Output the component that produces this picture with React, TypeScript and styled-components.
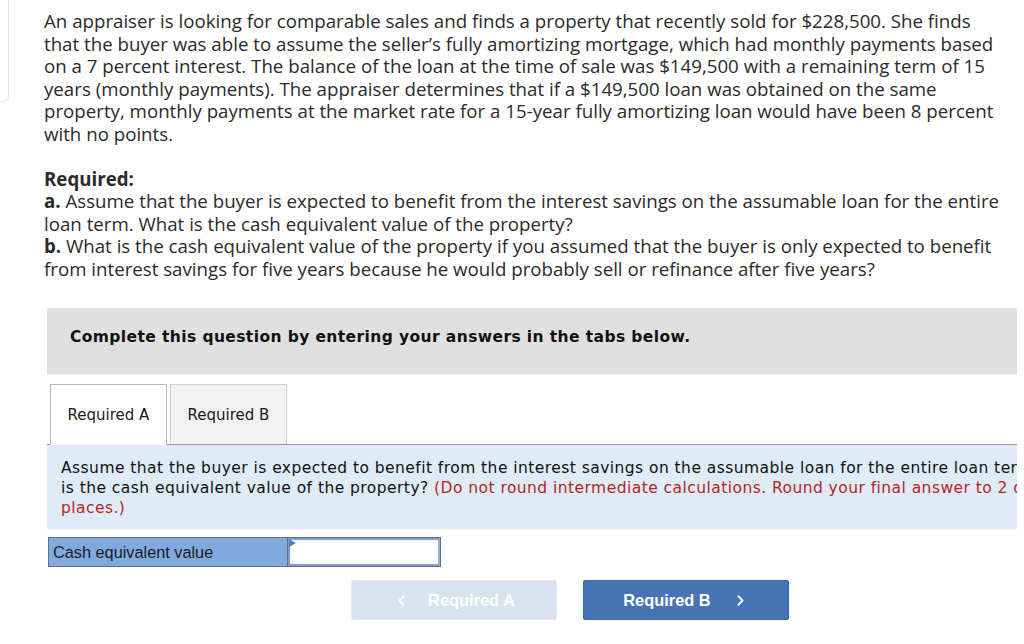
import React from "react";
import styled, { createGlobalStyle } from "styled-components";
import { ChevronLeft, ChevronRight } from "lucide-react";

const GlobalStyle = createGlobalStyle`
    html, body {
        margin: 0;
        padding: 0;
        background: #fff;
        overflow: hidden;
    }
`;

const Page = styled.div`
    display: flex;
    align-items: flex-start;
    width: 1024px;
    height: 644px;
`;

// edge of the neighbouring card, cut off by the viewport
const SideCard = styled.div`
    flex: 0 0 8px;
    height: 101px;
    border-right: 1px solid #e4e4e4;
    border-bottom: 1px solid #e4e4e4;
    border-bottom-right-radius: 6px;
`;

const Main = styled.main`
    margin-left: 35px;
    padding-top: 10px;
    width: 981px;
`;

const Prose = styled.div`
    width: 960px;
    font-family: "Open Sans", Lato, sans-serif;
    font-size: 18.7px;
    line-height: 22.5px;
    color: #2b2b2b;

    p {
        margin: 0 0 22.5px;
    }
    b {
        font-weight: 700;
    }
`;

// the question widget is wider than the page and gets cut on the right
const Frame = styled.div`
    margin-top: 28px;
    margin-left: 3px;
    width: 970px;
    overflow: hidden;
`;

const Inner = styled.div`
    width: 1046px;
`;

const Banner = styled.div`
    height: 67px;
    box-sizing: border-box;
    padding: 20px 23px 0;
    background: #e0e0e0;
    border-bottom: 1px solid #f0f0f0;
    font-family: "DejaVu Sans", Verdana, sans-serif;
    font-weight: 700;
    font-size: 15.5px;
    letter-spacing: 0.4px;
    color: #111;
`;

const TabBar = styled.div`
    display: flex;
    gap: 3px;
    margin-top: 9px;
    padding-left: 3px;
    border-bottom: 1px solid #9a9a9a;
`;

const Tab = styled.div<{ $active?: boolean }>`
    width: 117px;
    box-sizing: border-box;
    display: flex;
    align-items: center;
    justify-content: center;
    border: 1px solid ${(p) => (p.$active ? "#b8b8b8" : "#cfcfcf")};
    border-bottom: none;
    margin-bottom: ${(p) => (p.$active ? "-1px" : "0")};
    height: ${(p) => (p.$active ? "61px" : "60px")};
    background: ${(p) => (p.$active ? "#fff" : "#f2f2f2")};
    font-family: "DejaVu Sans", Verdana, sans-serif;
    font-size: 15px;
    color: #1a1a1a;
`;

const Prompt = styled.div`
    margin-right: -18px;
    background: #dfebf7;
    padding: 13px 14px 11px;
    font-family: "DejaVu Sans", Verdana, sans-serif;
    font-size: 15.5px;
    letter-spacing: 0.45px;
    line-height: 20px;
    color: #111;
`;

const Note = styled.span`
    color: #b3261e;
`;

const AnswerRow = styled.div`
    display: flex;
    margin-top: 8px;
    margin-left: 1px;
    width: 393px;
    height: 30px;
    border: 1px solid #6b6b6b;
    box-sizing: border-box;
`;

const Label = styled.div`
    width: 239px;
    background: #80aadf;
    border-right: 1px solid #6b6b6b;
    display: flex;
    align-items: center;
    padding-left: 4px;
    box-sizing: border-box;
    font-family: "Liberation Sans", Arial, sans-serif;
    font-size: 16.3px;
    color: #1b1b1b;
`;

const Field = styled.div`
    position: relative;
    flex: 1;
    background: #fff;
    border: 2px solid #7d9ed0;
    border-right-color: #8fb0dd;

    &::before {
        content: "";
        position: absolute;
        top: -1px;
        left: -1px;
        border-style: solid;
        border-width: 4px 0 4px 7px;
        border-color: transparent transparent transparent #4a7fc8;
    }
`;

const Nav = styled.div`
    display: flex;
    justify-content: center;
    gap: 26px;
    margin-top: 13px;
`;

const NavButton = styled.div<{ $disabled?: boolean }>`
    width: 206px;
    height: 40px;
    box-sizing: border-box;
    display: flex;
    align-items: center;
    justify-content: center;
    gap: ${(p) => (p.$disabled ? "18px" : "21px")};
    border-radius: 2px;
    background: ${(p) => (p.$disabled ? "#d9e3f0" : "#4574b5")};
    border: 1px solid ${(p) => (p.$disabled ? "#e3eaf4" : "#3f6aa8")};
    font-family: "Liberation Sans", Arial, sans-serif;
    font-weight: 700;
    font-size: 16.4px;
    color: #fff;
`;

export default function App() {
    return (
        <>
            <GlobalStyle />
            <Page>
                <SideCard />
                <Main>
                    <Prose>
                        <p>
                            An appraiser is looking for comparable sales and finds a property that recently sold for
                            $228,500. She finds that the buyer was able to assume the seller’s fully amortizing
                            mortgage, which had monthly payments based on a 7 percent interest. The balance of the
                            loan at the time of sale was $149,500 with a remaining term of 15 years (monthly
                            payments). The appraiser determines that if a $149,500 loan was obtained on the same
                            property, monthly payments at the market rate for a 15-year fully amortizing loan would
                            have been 8 percent with no points.
                        </p>
                        <p>
                            <b>Required:</b>
                            <br />
                            <b>a.</b> Assume that the buyer is expected to benefit from the interest savings on the
                            assumable loan for the entire loan term. What is the cash equivalent value of the
                            property?
                            <br />
                            <b>b.</b> What is the cash equivalent value of the property if you assumed that the buyer
                            is only expected to benefit from interest savings for five years because he would
                            probably sell or refinance after five years?
                        </p>
                    </Prose>
                    <Frame>
                        <Inner>
                            <Banner>Complete this question by entering your answers in the tabs below.</Banner>
                            <TabBar>
                                <Tab $active>Required A</Tab>
                                <Tab>Required B</Tab>
                            </TabBar>
                            <Prompt>
                                Assume that the buyer is expected to benefit from the interest savings on the
                                assumable loan for the entire loan term. What is the cash equivalent value of the
                                property?{" "}
                                <Note>
                                    (Do not round intermediate calculations. Round your final answer to 2 decimal
                                    places.)
                                </Note>
                            </Prompt>
                            <AnswerRow>
                                <Label>Cash equivalent value</Label>
                                <Field />
                            </AnswerRow>
                            <Nav>
                                <NavButton $disabled>
                                    <ChevronLeft size={17} strokeWidth={2.5} />
                                    Required A
                                </NavButton>
                                <NavButton>
                                    Required B
                                    <ChevronRight size={17} strokeWidth={2.5} />
                                </NavButton>
                            </Nav>
                        </Inner>
                    </Frame>
                </Main>
            </Page>
        </>
    );
}
